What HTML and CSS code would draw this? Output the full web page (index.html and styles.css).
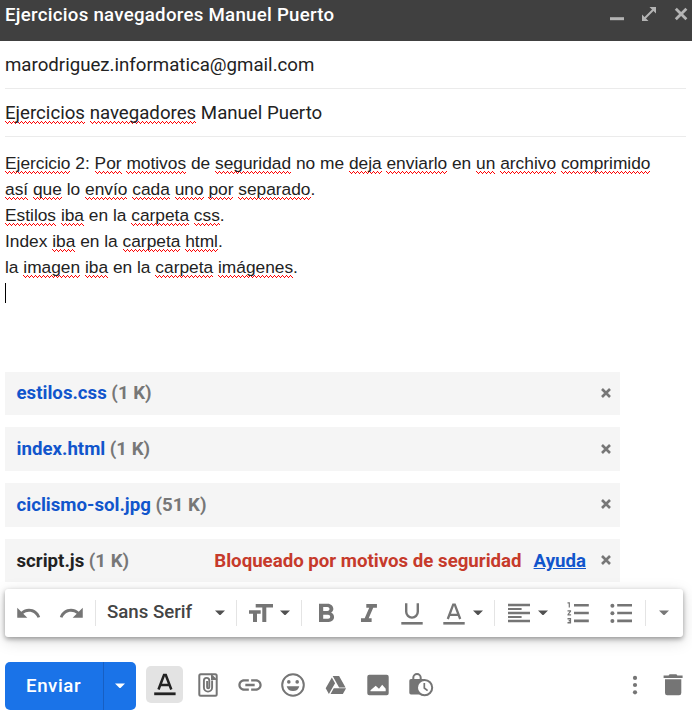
FILE: index.html
```html
<!DOCTYPE html>
<html lang="es">
<head>
<meta charset="utf-8">
<title>Ejercicios navegadores Manuel Puerto</title>
<link rel="stylesheet" href="styles.css">
</head>
<body>
<main class="compose">
  <header class="titlebar">
    <h1 class="title">Ejercicios navegadores Manuel Puerto</h1>
    <div class="window-controls">
      <svg viewBox="0 0 16 16"><path d="M1 11.2h14v3H1z" fill="currentColor"/></svg>
      <svg viewBox="0 0 16 16"><path d="M8.5 1H15v6.5zM1 8.5V15h6.5z" fill="currentColor"/><path d="M3 13L13 3" stroke="currentColor" stroke-width="2"/></svg>
      <svg viewBox="0 0 16 16"><path d="M2.8 2.7l10.6 10.6M13.4 2.7L2.8 13.3" stroke="currentColor" stroke-width="2.8"/></svg>
    </div>
  </header>
  <div class="field">marodriguez.informatica@gmail.com</div>
  <div class="field"><u>Ejercicios</u> <u>navegadores</u> Manuel Puerto</div>
  <div class="message">
    <div><u>Ejercicio</u> 2: <u>Por</u> <u>motivos</u> de <u>seguridad</u> no me <u>deja</u> <u>enviarlo</u> en <u>un</u> <u>archivo</u> <u>comprimido</u></div>
    <div><u>así</u> <u>que</u> lo <u>envío</u> <u>cada</u> <u>uno</u> <u>por</u> <u>separado</u>.</div>
    <div><u>Estilos</u> <u>iba</u> en la <u>carpeta</u> <u>css</u>.</div>
    <div>Index <u>iba</u> en la <u>carpeta</u> <u>html</u>.</div>
    <div>la <u>imagen</u> <u>iba</u> en la <u>carpeta</u> <u>imágenes</u>.</div>
    <div class="cursor"></div>
  </div>
  <ul class="attachments">
    <li><a class="name">estilos.css</a><span class="size">(1 K)</span><svg class="remove" viewBox="0 0 10 10"><path d="M1 1l8 8M9 1L1 9"/></svg></li>
    <li><a class="name">index.html</a><span class="size">(1 K)</span><svg class="remove" viewBox="0 0 10 10"><path d="M1 1l8 8M9 1L1 9"/></svg></li>
    <li><a class="name">ciclismo-sol.jpg</a><span class="size">(51 K)</span><svg class="remove" viewBox="0 0 10 10"><path d="M1 1l8 8M9 1L1 9"/></svg></li>
    <li><span class="name blocked">script.js</span><span class="size">(1 K)</span><span class="warning">Bloqueado por motivos de seguridad</span><a class="help">Ayuda</a><svg class="remove" viewBox="0 0 10 10"><path d="M1 1l8 8M9 1L1 9"/></svg></li>
  </ul>
  <div class="toolbar">
    <div class="tool"><svg class="icon" viewBox="0 0 28 28"><path transform="translate(0 .9) scale(1.12)" d="M12.5 8c-2.65 0-5.05.99-6.9 2.6L2 7v9h9l-3.62-3.62c1.39-1.16 3.16-1.88 5.12-1.88 3.54 0 6.55 2.31 7.6 5.5l2.37-.78C21.08 11.03 17.15 8 12.5 8z"/></svg></div>
    <div class="tool"><svg class="icon" viewBox="0 0 28 28"><path transform="translate(28 .9) scale(-1.12 1.12)" d="M12.5 8c-2.65 0-5.05.99-6.9 2.6L2 7v9h9l-3.62-3.62c1.39-1.16 3.16-1.88 5.12-1.88 3.54 0 6.55 2.31 7.6 5.5l2.37-.78C21.08 11.03 17.15 8 12.5 8z"/></svg></div>
    <div class="divider after-history"></div>
    <div class="font-picker"><span>Sans Serif</span><i class="caret"></i></div>
    <div class="divider"></div>
    <div class="size-picker"><svg class="icon" viewBox="0 0 28 28"><path d="M8.7 5H26v3.4h-6.7V23h-4V8.4H8.7zM2 11.3h11.7v3.4H10V23H6v-8.3H2z"/></svg><i class="caret"></i></div>
    <div class="divider"></div>
    <div class="tool bold"><svg class="icon" viewBox="0 0 28 28"><path transform="translate(-2.8 -.54) scale(1.4 1.31)" d="M15.6 10.79c.97-.67 1.65-1.77 1.65-2.79 0-2.26-1.75-4-4-4H7v14h7.04c2.09 0 3.71-1.7 3.71-3.79 0-1.52-.86-2.82-2.15-3.42zM10 6.5h3c.83 0 1.5.67 1.5 1.5s-.67 1.5-1.5 1.5h-3v-3zm3.5 9H10v-3h3.5c.83 0 1.5.67 1.5 1.5s-.67 1.5-1.5 1.5z"/></svg></div>
    <div class="tool spaced"><svg class="icon" viewBox="0 0 28 28"><path transform="translate(-2 -.3) scale(1.33 1.3)" d="M10 4v3h2.21l-3.42 8H6v3h8v-3h-2.21l3.42-8H18V4z"/></svg></div>
    <div class="tool spaced"><svg class="icon" viewBox="0 0 28 28"><path d="M3.3 23h21.4v2.6H3.3z"/><path class="line" d="M8.2 4.2v8.6a5.8 5.8 0 0 0 11.6 0V4.2" stroke-width="2.4"/></svg></div>
    <div class="tool"><svg class="icon" viewBox="0 0 28 28"><path d="M3.3 23h21.4v2.6H3.3z"/><path class="line" d="M7.8 20L13.2 5.6h1.6L20.2 20M9.6 15.8h8.8" stroke-width="2.3"/></svg></div>
    <i class="caret after-color"></i>
    <div class="divider after-caret"></div>
    <div class="align-picker"><svg class="icon" viewBox="0 0 28 28"><path d="M3 4.7h22v2.6H3zM3 9.1h13.6v2H3zM3 12.7h22v2.6H3zM3 17h13.6v2H3zM3 20.7h22v2.6H3z"/></svg><i class="caret"></i></div>
    <div class="tool"><svg class="icon" viewBox="0 0 28 28"><path transform="translate(1.1 -2) scale(1.2 1.32)" d="M2 17h2v.5H3v1h1v.5H2v1h3v-4H2v1zm1-9h1V4H2v1h1v3zm-1 3h1.8L2 13.1v.9h3v-1H3.2L5 10.9V10H2v1z"/><path d="M10 5h14.8v2.6H10zM10 12.7h14.8v2.6H10zM10 20.6h14.8v2.6H10z"/></svg></div>
    <div class="tool spaced"><svg class="icon" viewBox="0 0 28 28"><circle cx="5.4" cy="6.7" r="2"/><circle cx="5.4" cy="14.3" r="2"/><circle cx="5.4" cy="22" r="2"/><path d="M10.2 5h14.8v2.6H10.2zM10.2 12.7h14.8v2.6H10.2zM10.2 20.6h14.8v2.6H10.2z"/></svg></div>
    <div class="divider after-lists"></div>
    <i class="caret more-caret"></i>
  </div>
  <footer class="actions">
    <div class="send"><span class="send-label">Enviar</span><span class="send-menu"><i class="caret"></i></span></div>
    <div class="format"><svg class="icon" viewBox="0 0 28 28"><path d="M3.2 22.4h21.4v2.8H3.2z"/><path class="line" d="M7.5 19.5L13 5h1.8l5.5 14.5M9.4 15h9" stroke-width="2.5"/></svg></div>
    <div class="action"><svg class="icon" viewBox="0 0 28 28"><rect class="line" x="5.3" y="3.3" width="17.4" height="21.4" rx="1.5" stroke-width="2"/><path d="M17 2.5l6.5 6.5H17z"/><path class="line" d="M18.1 9.5v7a4.1 4.1 0 0 1-8.2 0V9.6a2.7 2.7 0 0 1 5.4 0v6.7a1.1 1.1 0 0 1-2.2 0V10" stroke-width="1.9"/></svg></div>
    <div class="action link"><svg class="icon" viewBox="0 0 24 24"><path d="M3.9 12c0-1.71 1.39-3.1 3.1-3.1h4V7H7c-2.76 0-5 2.24-5 5s2.24 5 5 5h4v-1.9H7c-1.71 0-3.1-1.39-3.1-3.1zM8 13h8v-2H8v2zm9-6h-4v1.9h4c1.71 0 3.1 1.39 3.1 3.1s-1.39 3.1-3.1 3.1h-4V17h4c2.76 0 5-2.24 5-5s-2.24-5-5-5z"/></svg></div>
    <div class="action"><svg class="icon" viewBox="0 0 28 28"><circle class="line" cx="14" cy="14" r="10.8" stroke-width="2"/><circle cx="9.8" cy="10.9" r="1.8"/><circle cx="18.2" cy="10.9" r="1.8"/><path d="M7.7 15.2h12.6a6.5 6.5 0 0 1-12.6 0z"/></svg></div>
    <div class="action"><svg class="icon" viewBox="0 0 28 28"><path transform="translate(2.6 3.1) scale(.94 .95)" d="M7.71 3.5L1.15 15l3.43 6 6.55-11.5zM9.73 15L6.3 21h13.12l3.43-6zM22.28 14L15.42 2H8.58l6.85 12z"/></svg></div>
    <div class="action"><svg class="icon" viewBox="0 0 28 28"><path fill-rule="evenodd" d="M5.3 3.7h17.4a2 2 0 0 1 2 2v16.6a2 2 0 0 1-2 2H5.3a2 2 0 0 1-2-2V5.7a2 2 0 0 1 2-2zM6.5 20.3h15.2v-2.5l-3.5-4-3.2 4-3.3-3-5.2 4.5z"/></svg></div>
    <div class="action"><svg class="icon" viewBox="0 0 28 28"><path d="M4 8h12a2 2 0 0 1 2 2v13.4H4a1.7 1.7 0 0 1-1.7-1.7V9.7A1.7 1.7 0 0 1 4 8z"/><path class="line" d="M6.3 9V6.8a3.7 3.7 0 0 1 7.4 0V9" stroke-width="2"/><circle class="clock" cx="17.6" cy="16.7" r="7.6"/><path class="line" d="M17.3 12v5l3.3 2.6" stroke-width="1.7"/></svg></div>
    <div class="action more"><svg class="icon" viewBox="0 0 28 28"><circle cx="14" cy="6.9" r="2.1"/><circle cx="14" cy="14" r="2.1"/><circle cx="14" cy="21.3" r="2.1"/></svg></div>
    <div class="action trash"><svg class="icon" viewBox="0 0 28 28"><path d="M4.6 4.5h5l1-1.2h6.8l1 1.2h5.2V7h-19zM6 8.3h16.3v13.8a2.2 2.2 0 0 1-2.2 2.2H8.2A2.2 2.2 0 0 1 6 22.1z"/></svg></div>
  </footer>
</main>
</body>
</html>
```
FILE: styles.css
```css
* { box-sizing: border-box; }

body {
  margin: 0;
  background: #fff;
  color: #222;
  font-family: Roboto, "Liberation Sans", sans-serif;
  font-size: 18.67px;
}

.compose {
  width: 692px;
  height: 723px;
  overflow: hidden;
  display: flex;
  flex-direction: column;
}

.titlebar {
  flex: none;
  height: 41px;
  padding: 3px 3px 0 5px;
  background: #404040;
  display: flex;
  justify-content: space-between;
}

.title {
  margin: 0;
  color: #fff;
  font-size: 18.67px;
  font-weight: 500;
  line-height: 25px;
  letter-spacing: .27px;
}

.window-controls {
  display: flex;
  gap: 16px;
  padding-top: 3px;
  color: #b4b4b4;
}

.window-controls svg { width: 16px; height: 16px; }

.field {
  flex: none;
  height: 48px;
  margin: 0 6px 0 5px;
  border-bottom: 1px solid #ebebeb;
  line-height: 49px;
  white-space: nowrap;
}

/* Spell-check squiggle: three pixel rows of a 4px zigzag */
u {
  text-decoration: none;
  background:
    repeating-linear-gradient(90deg, red 0 1px, transparent 1px 4px) 0 calc(100% - 2px) / 100% 1px no-repeat,
    repeating-linear-gradient(90deg, transparent 0 1px, red 1px 2px) 0 calc(100% - 1px) / 100% 1px no-repeat,
    repeating-linear-gradient(90deg, transparent 0 2px, red 2px 3px, transparent 3px 4px) 0 100% / 100% 1px no-repeat;
}

.message {
  flex: none;
  height: 234.6px;
  padding: 13px 0 0 5px;
  font-family: "Liberation Sans", Arial, sans-serif;
  font-size: 17.33px;
  line-height: 26px;
  white-space: nowrap;
}

.message u { padding-bottom: 1px; }

.cursor {
  width: 1px;
  height: 20px;
  margin-top: 3px;
  background: #000;
}

.attachments {
  flex: none;
  height: 217.4px;
  margin: 0 0 0 5px;
  padding: 0;
  width: 615px;
  list-style: none;
  display: flex;
  flex-direction: column;
  gap: 12.15px;
  font-weight: 700;
  font-size: 18.67px;
}

.attachments li {
  flex: none;
  height: 43.6px;
  padding: 0 9px 0 11.5px;
  background: #f5f5f5;
  display: flex;
  align-items: center;
}

.name { color: #15c; }
.blocked { color: #222; }
.size { margin-left: 4.6px; color: #777; }
.warning { margin-left: auto; color: #c63a2b; }
.help { margin-left: 12px; color: #15c; text-decoration: underline; }

.remove {
  width: 10px;
  height: 10px;
  margin: 0 0 1px auto;
  fill: none;
  stroke: #777;
  stroke-width: 2.6;
}

.help + .remove { margin-left: 15px; }

.toolbar {
  flex: none;
  width: 678px;
  height: 48px;
  margin: 0 0 0 5px;
  padding-left: 3px;
  border-radius: 3px;
  background: #fff;
  box-shadow: 0 2px 5px rgba(0, 0, 0, .35), 0 4px 16px rgba(0, 0, 0, .15);
  display: flex;
  align-items: center;
}

.icon {
  flex: none;
  display: block;
  width: 28px;
  height: 28px;
  fill: #757575;
  stroke: none;
}

.icon .line { fill: none; stroke: #757575; }
.icon .clock { fill: #fff; stroke: #757575; stroke-width: 2; }

.tool {
  width: 42px;
  display: flex;
  justify-content: center;
}

.spaced { margin-left: 1px; }
.bold { margin-left: 3px; }

.divider { width: 1px; height: 26px; background: #e4e4e4; }
.after-history { margin-left: 3px; }
.after-caret { margin-left: 11px; }
.after-lists { margin-left: 3px; }

.caret {
  width: 10px;
  height: 5px;
  background: #505050;
  clip-path: polygon(0 0, 100% 0, 50% 100%);
}

.font-picker {
  width: 140px;
  padding: 0 11px;
  color: #444;
  font-weight: 500;
  font-size: 18.67px;
  display: flex;
  align-items: center;
  justify-content: space-between;
}

.font-picker span { padding-bottom: 1px; }

.size-picker { width: 64px; padding-left: 10px; display: flex; align-items: center; gap: 5px; }
.after-color { margin-left: -2px; }
.align-picker { width: 62px; padding-left: 10px; display: flex; align-items: center; gap: 5px; }
.more-caret { margin-left: 13px; background: #777; }

.actions {
  flex: none;
  margin: 25px 0 0 5px;
  width: 687px;
  height: 48px;
  display: flex;
}

.send {
  width: 131px;
  border-radius: 5px;
  background: #1a73e8;
  color: #fff;
  font-weight: 500;
  display: flex;
  overflow: hidden;
}

.send-label { width: 98px; padding-left: 21px; line-height: 48px; letter-spacing: .6px; }

.send-menu {
  flex: 1;
  border-left: 1px solid #175fc3;
  display: flex;
  align-items: center;
  justify-content: center;
}

.send-menu .caret { background: #fff; }

.format {
  width: 37px;
  height: 37px;
  margin: 4px 4px 0 10px;
  border-radius: 5px;
  background: #e3e3e3;
  display: flex;
  align-items: center;
  justify-content: center;
}

.format .icon { fill: #222; }
.format .icon .line { stroke: #222; }

.action {
  width: 42.5px;
  padding-top: 9px;
  display: flex;
  justify-content: center;
}

.link { padding-right: 1px; }
.more { margin-left: auto; width: 28px; }
.trash { width: 28px; margin: 0 5px 0 10px; }
```
